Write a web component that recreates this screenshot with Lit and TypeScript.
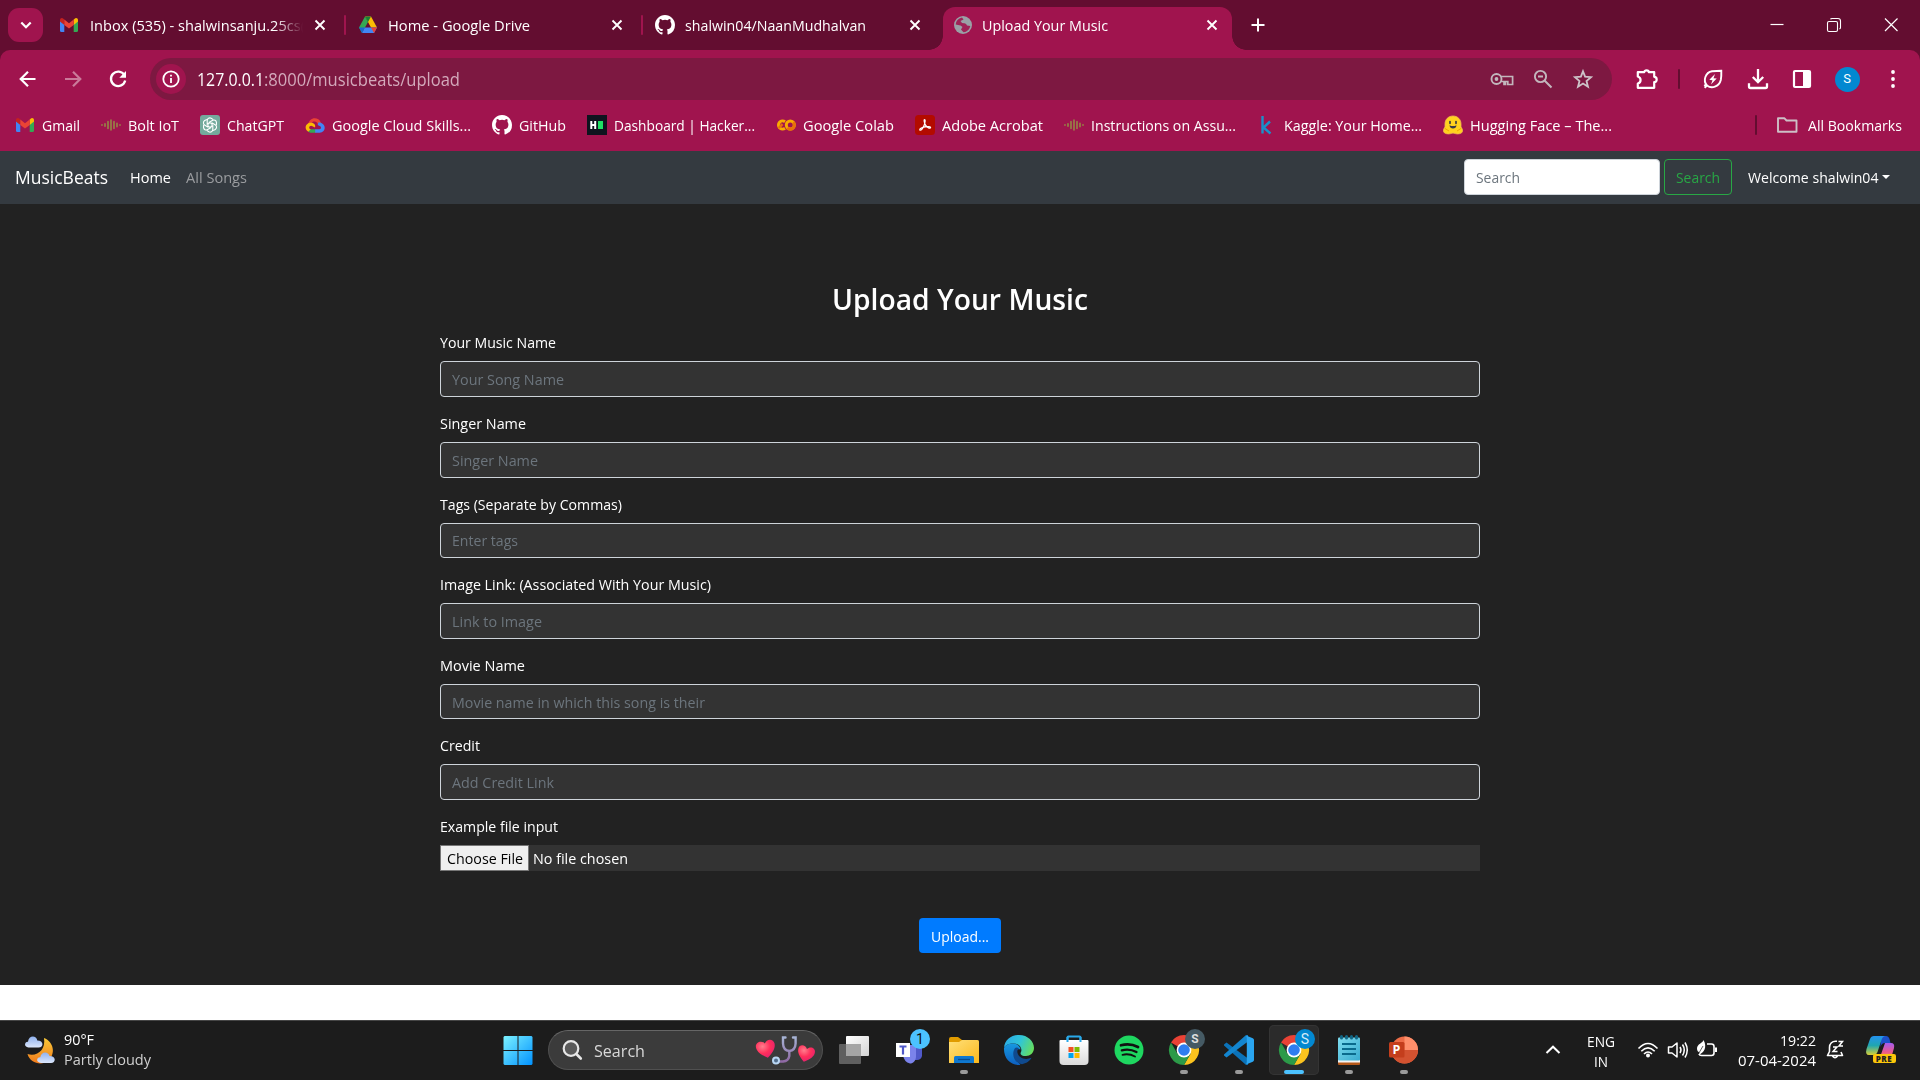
import { LitElement, html, svg, css, nothing } from "lit";
import { customElement, property } from "lit/decorators.js";

/* A single line of text, condensed or widened to an exact advance width. */
@customElement("fit-text")
class FitText extends LitElement {
  static styles = css`
    :host { display: inline-block; white-space: pre; flex: none; }
    .run { display: inline-block; transform-origin: 0 50%; }
  `;
  @property({ type: Number }) w = 0;
  @property() text = "";
  render() {
    return html`<span class="run">${this.text}</span>`;
  }
  updated() {
    const run = this.renderRoot.querySelector(".run") as HTMLElement;
    run.style.transform = "none";
    const natural = run.getBoundingClientRect().width;
    if (natural > 0) {
      this.style.width = `${this.w}px`;
      run.style.transform = `scaleX(${this.w / natural})`;
      run.style.marginRight = `${this.w - natural}px`;
    }
  }
}

const t = (text: string, w: number, cls = "") =>
  html`<fit-text class=${cls} .text=${text} .w=${w}></fit-text>`;

const ic = (w: number, h: number, body: unknown, cls = "") =>
  html`<svg class="ic ${cls}" width=${w} height=${h} viewBox="0 0 ${w} ${h}" fill="none">${body}</svg>`;

/* ---------- favicons ---------- */
const gmail = ic(20, 20, svg`
  <path d="M1 5.5V15.5Q1 17 2.4 17H5.3V9.2z" fill="#4285f4"/>
  <path d="M19 5.5V15.5Q19 17 17.600 17H14.700V9.200z" fill="#34a853"/>
  <path d="M14.700 4.800V9.900L19 6.600V5.200C19 3.300 17 2.400 15.600 3.800z" fill="#fbbc04"/>
  <path d="M1 5.200V6.600L5.300 9.900V4.500L4.400 3.800C3 2.400 1 3.300 1 5.200z" fill="#c5221f"/>
  <path d="M5.300 4.500L10 8.200L14.700 4.500V9.900L10 13.500L5.300 9.900z" fill="#ea4335"/>`);

const drive = ic(20, 20, svg`
  <path d="M7 1.500H13L19 12.500H13z" fill="#fbbc04"/>
  <path d="M7 1.500L1 12.500L4 18L10 7z" fill="#34a853"/>
  <path d="M7 1.500H13L10 7z" fill="#188038"/>
  <path d="M6.700 12.500H19L16 18H4z" fill="#4285f4"/>
  <path d="M13 12.500H19L16 18z" fill="#ea4335"/>
  <path d="M1 12.500H6.900L4 18z" fill="#1967d2"/>`);

const github = ic(20, 20, svg`
  <path transform="scale(1.25)" fill="#fff" d="M8 0C3.580 0 0 3.580 0 8c0 3.540 2.290 6.530 5.470 7.590.4.070.550-.170.550-.380 0-.190-.010-.820-.010-1.490-2.010.370-2.530-.490-2.690-.940-.090-.230-.480-.940-.820-1.130-.280-.150-.680-.520-.010-.530.630-.010 1.080.580 1.230.820.720 1.210 1.870.870 2.330.660.070-.520.280-.870.510-1.070-1.780-.200-3.640-.890-3.640-3.950 0-.870.310-1.590.820-2.150-.080-.200-.360-1.020.080-2.120 0 0 .670-.210 2.200.820a7.600 7.600 0 0 1 4 0c1.530-1.040 2.200-.820 2.200-.820.440 1.100.160 1.920.080 2.120.510.560.820 1.270.820 2.150 0 3.070-1.870 3.750-3.650 3.950.290.250.540.730.540 1.480 0 1.070-.010 1.930-.010 2.200 0 .210.150.460.550.380A8 8 0 0 0 16 8c0-4.420-3.580-8-8-8z"/>`);

const globe = ic(20, 20, svg`
  <circle cx="10" cy="10" r="9" fill="#9aa0a6"/>
  <path d="M9 2.500C5 3.500 3 6 2.700 9.500L7.500 10.500L9.500 12L8 14.500L10.500 17.300C14 17 16.500 14.500 17.300 11L14 10.500L13 8.500L9 8L7.500 6L10.500 4.500z" fill="#a0144e" opacity=".9"/>
  <path d="M9.500 6.300L13.300 6.800L16.500 9.500L13.500 9.300z" fill="#9aa0a6"/>`);

const bolt = ic(20, 20, svg`
  <g stroke="#959843" stroke-width="1.400" stroke-linecap="round">
    <path d="M1 9.800V10.200M4 8.800V11.200M16 8.300V11.700M19 9.800V10.200"/>
    <path d="M7 6.500V13.500M13 6.500V13.500M10 5V15"/></g>`);

const chatgpt = ic(20, 20, svg`
  <rect width="20" height="20" rx="3" fill="#74aa9c"/>
  <g stroke="#fff" stroke-width="1.100">
    ${[0, 60, 120, 180, 240, 300].map((a) => svg`
      <path transform="rotate(${a} 10 10)" d="M10 7.700L7.200 9.200V5.700C7.200 3.500 9.300 2.300 11.200 3.200L13.300 4.600"/>`)}
  </g>`);

const cloud = ic(20, 20, svg`
  <path d="M3.200 9.500C3.600 4.500 9 1.600 13.300 4.300C14.800 5.300 15.500 6.500 15.900 8L12.900 9.600C12.300 6.600 8.700 5.400 6.500 8z" fill="#ea4335"/>
  <path d="M13.500 7.200L15.900 7.700C19.500 9.300 21 13 18.500 16Q17 17.600 14.700 17.700H10V14.200H14.500C16.500 14 16.500 11.500 14.700 11L12.700 10z" fill="#4285f4"/>
  <path d="M3 16.500L5.700 14.200H10.200V17.700H5.500Q4 17.600 3 16.500z" fill="#34a853"/>
  <path d="M5.500 7.700C9 7.300 11 10 10 12.500L7.500 11.300C6.500 10 4.200 10.700 4.200 12.500C4.200 13.500 4.900 14.200 5.800 14.300L3.300 16.700C-1.200 14 .300 8 5.500 7.700z" fill="#fbbc04"/>`);

const hacker = ic(20, 20, svg`
  <rect width="20" height="20" fill="#0e141e"/>
  <path d="M4.300 6V14M8.200 6V14M4 10H8.500" stroke="#fff" stroke-width="2"/>
  <rect x="11" y="6" width="5" height="8" fill="#1ee063"/>`);

const colab = ic(20, 20, svg`
  <circle cx="14.300" cy="10" r="4" stroke="#f9ab00" stroke-width="3"/>
  <path d="M9 6.700A4.100 4.100 0 1 0 9 13.300" stroke="#f9ab00" stroke-width="3"/>
  <path d="M2.800 13L6.500 9.200" stroke="#e8710a" stroke-width="2.500"/>
  <path d="M11.300 13A4 4 0 0 0 17.200 7.200" stroke="#e8710a" stroke-width="3"/>`);

const acrobat = ic(20, 20, svg`
  <rect width="20" height="20" rx="3.500" fill="#b30b00"/>
  <path d="M9.500 4.500C10.700 4.500 10 8 9.200 10C8 13 6.200 15.600 5 15.200C3.800 14.300 7 12.300 10 11.800C13 11.300 15.700 11.600 15.600 12.800C15 14 11.600 12.300 10.200 9.600C9.300 7.800 8.700 4.500 9.500 4.500z" stroke="#fff" stroke-width="1.200"/>`);

const kaggle = ic(20, 20, svg`
  <path d="M5.500 1V18.500M13 6.500L6.500 12.500L13.500 18.500" stroke="#1c8fc9" stroke-width="2.400"/>`);

const hugging = ic(20, 20, svg`
  <path d="M10 1C14.700 1 18 4.500 18 9V12C20 14.500 20.500 18 16.500 18.700C13 19.500 11.500 18 10 18C8.500 18 7 19.500 3.500 18.700C-.500 18 0 14.500 2 12V9C2 4.500 5.300 1 10 1z" fill="#ffd21e" stroke="#f0b850" stroke-width=".8"/>
  <path d="M7 6.500V8.300M13 6.500V8.300" stroke="#3a3b45" stroke-width="1.700" stroke-linecap="round"/>
  <path d="M6.500 10.200Q10 12 13.500 10.200Q13 13.500 10 13.500T6.500 10.200z" fill="#3a3b45"/>
  <path d="M2 13.500L6 16M18 13.500L14 16" stroke="#f0a400" stroke-width="1"/>`);

/* ---------- browser controls ---------- */
const closeX = ic(20, 20, svg`<path d="M5.500 5.500L14.500 14.500M14.500 5.500L5.500 14.500" stroke="#fff" stroke-width="1.900"/>`);
const plus = ic(20, 20, svg`<path d="M10 3.500V16.500M3.500 10H16.500" stroke="#fff" stroke-width="2"/>`);
const chevronDown = ic(20, 20, svg`<path d="M5.300 7.500L10 12.200L14.700 7.500" stroke="#fff" stroke-width="2.200"/>`);
const arrowBack = ic(24, 24, svg`<path d="M19.500 12H5M12 4.700L4.700 12L12 19.300" stroke="#fff" stroke-width="2.200"/>`);
const arrowFwd = ic(24, 24, svg`<path d="M4 12H19M12 4.700L19.300 12L12 19.300" stroke="#ca7a9a" stroke-width="2.200"/>`);
const reload = ic(24, 24, svg`
  <path d="M18.300 8A7.200 7.200 0 1 0 19.200 13.500" stroke="#fff" stroke-width="2.300"/>
  <path d="M20 4V10.700H13.300z" fill="#fff"/>`);
const info = ic(20, 20, svg`
  <circle cx="10" cy="10" r="7.700" stroke="#fff" stroke-width="1.800"/>
  <path d="M10 9V14M10 5.800V7.600" stroke="#fff" stroke-width="1.800"/>`);
const key = ic(24, 24, svg`
  <circle cx="6.500" cy="12" r="5" stroke="#c2b6bc" stroke-width="1.900"/>
  <circle cx="6.500" cy="12" r="1.900" fill="#c2b6bc"/>
  <path d="M11 9.500H22.600V17.500H17.800V14.500H15.500V17.500H14V14.500H11" stroke="#c2b6bc" stroke-width="1.700"/>`);
const zoomOut = ic(22, 22, svg`
  <circle cx="8.500" cy="8.500" r="5.600" stroke="#c2b6bc" stroke-width="1.900"/>
  <path d="M12.500 12.500L19.500 19.500M6 8.500H11" stroke="#c2b6bc" stroke-width="2"/>`);
const star = ic(22, 22, svg`
  <path d="M11 3.300L13.100 8.700L19 9.200L14.500 13L16 18.800L11 15.600L6 18.800L7.500 13L3 9.200L8.900 8.700z" stroke="#cdc3c8" stroke-width="1.800"/>`);
const puzzle = ic(24, 24, svg`
  <path d="M3.800 5.200H10.200C10.200 2.700 14.800 2.700 14.800 5.200H20.200V9.800C23.500 9.800 23.500 15 20.200 15V20.800H3.800V16.500C7.500 15.500 7.500 10.500 3.800 9.500z" stroke="#fff" stroke-width="2.200" stroke-linejoin="round"/>`);
const leaf = ic(24, 24, svg`
  <path d="M3.700 20.800L6 18.500C1.500 13.500 4.500 5.500 11 4.300Q15.500 3.800 20.300 3.700Q20.500 9 19.800 13C18 20 10.500 22 6 18.500M3.500 17.500L5 20.300" stroke="#fff" stroke-width="1.900"/>
  <path d="M14 7L8.300 12.700L11.500 13.200L10 17.500L15.700 11.600L12.500 11.200z" fill="#fff"/>`);
const download = ic(24, 24, svg`
  <path d="M12 2V15M6.800 10L12 15.200L17.200 10" stroke="#fff" stroke-width="2.300"/>
  <path d="M3 16.300V19.500Q3 21 4.500 21H19.500Q21 21 21 19.500V16.300" stroke="#fff" stroke-width="2.300"/>`);
const sidePanel = ic(24, 24, svg`
  <rect x="4" y="4" width="16" height="16" rx="1" stroke="#fff" stroke-width="2.200"/>
  <rect x="13" y="4" width="7" height="16" fill="#fff"/>`);
const dots = ic(8, 24, svg`<circle cx="4" cy="5" r="1.900" fill="#fff"/><circle cx="4" cy="12" r="1.900" fill="#fff"/><circle cx="4" cy="19" r="1.900" fill="#fff"/>`);
const folder = ic(24, 20, svg`<path d="M3 16.700V3.300H9.500L11.500 5.500H21.500V16.700z" stroke="#cdbfc6" stroke-width="1.900" stroke-linejoin="round"/>`);

/* ---------- taskbar ---------- */
const weather = ic(32, 32, svg`
  <defs>
    <linearGradient id="moon" x1="0" y1="0" x2="0" y2="1"><stop offset="0" stop-color="#f8c938"/><stop offset="1" stop-color="#f07a1c"/></linearGradient>
    <linearGradient id="cl" x1="0" y1="0" x2="0" y2="1"><stop offset="0" stop-color="#8fb1ee"/><stop offset="1" stop-color="#dbe6fb"/></linearGradient>
  </defs>
  <path d="M20 4C30 8 32 20 24 27C17 32 6 29 3.500 20C13 23 22 16 20 4z" fill="url(#moon)"/>
  <path d="M4.500 13.500C-.500 13 .500 7.500 4 7.800C4.500 1 12.500 1 13.300 6.500C20 6.500 20 13.500 14.500 13.500z" fill="url(#cl)"/>
  <path d="M17 29C11.500 28.500 12.500 23 16.300 23.300C17 17 24.500 17 25.500 22C32.500 22 32 29 27 29z" fill="url(#cl)"/>`);

const startLogo = ic(50, 50, svg`
  <defs><linearGradient id="win" x1="10" y1="11" x2="40" y2="40" gradientUnits="userSpaceOnUse"><stop offset="0" stop-color="#7df3ff"/><stop offset="1" stop-color="#0091ff"/></linearGradient></defs>
  <path d="M11.500 11H24.500V25H10.500V12zM25.500 11H38.500L39.500 12V25H25.500zM10.500 26H24.500V40H11.500L10.500 39zM25.500 26H39.500V39L38.500 40H25.500z" fill="url(#win)"/>`);

const loupe = ic(24, 24, svg`
  <circle cx="11" cy="10.500" r="7.300" fill="#5a5a5a" stroke="#e8e8e8" stroke-width="2.200"/>
  <path d="M16.300 16L20.800 20.500" stroke="#e8e8e8" stroke-width="2.600" stroke-linecap="round"/>`);

const hearts = ic(62, 30, svg`
  <defs><radialGradient id="ht" cx=".35" cy=".3" r=".8"><stop offset="0" stop-color="#ff7d8c"/><stop offset=".5" stop-color="#ff2f5b"/><stop offset="1" stop-color="#e01e72"/></radialGradient>
  <linearGradient id="st" x1="0" y1="0" x2="0" y2="1"><stop offset="0" stop-color="#a6b3d4"/><stop offset="1" stop-color="#8f69a4"/></linearGradient></defs>
  <path transform="rotate(-12 11 14)" d="M11 23C4 18 1.500 14.500 1.500 10.500C1.500 5 8.500 4 11 8.500C13.500 4 20.500 5 20.500 10.500C20.500 14.500 18 18 11 23z" fill="url(#ht)"/>
  <path transform="rotate(14 51 18)" d="M51 27C45 22.500 42.500 19.500 42.500 15.500C42.500 10.500 49 10 51 14C53 10 59.500 10.500 59.500 15.500C59.500 19.500 57 22.500 51 27z" fill="url(#ht)"/>
  <path d="M30.500 2.500H28V8.500Q28.300 15.500 34.300 16Q40.300 15.500 40.600 8.500V2.500H38M34.300 16V21Q33.500 26 28 26.500H22" stroke="url(#st)" stroke-width="2.400" stroke-linecap="round"/>
  <circle cx="21" cy="25.500" r="3" fill="#54708e" stroke="#b9d7f3" stroke-width="2"/>`);

const taskView = ic(50, 50, svg`
  <defs><linearGradient id="tv" x1="0" y1="0" x2="1" y2="1"><stop offset="0" stop-color="#fff"/><stop offset="1" stop-color="#d4d4d4"/></linearGradient></defs>
  <rect x="17" y="11" width="23" height="20" rx="1" fill="url(#tv)"/>
  <rect x="10" y="19" width="22" height="20" rx="1" fill="#6b6b6b" opacity=".85"/>
  <rect x="17" y="19" width="15" height="12" fill="#a5a5a5"/>`);

const teams = ic(50, 50, svg`
  <path d="M26 20H38V31Q37 35 33 35H26z" fill="#5059c9"/>
  <circle cx="34" cy="16" r="4" fill="#5059c9"/>
  <path d="M19 20H32V31C32 37 28 38.500 26 38.500Q20 37 19 30z" fill="#7b83eb"/>
  <rect x="12" y="18" width="14" height="14" fill="#fff"/>
  <path d="M15.500 21.500H22.500M19 21.500V29.500" stroke="#5059c9" stroke-width="2.200"/>`);

const explorer = ic(50, 50, svg`
  <defs><linearGradient id="fo" x1="0" y1="0" x2="1" y2="1"><stop offset="0" stop-color="#ffe07a"/><stop offset="1" stop-color="#fbb81c"/></linearGradient></defs>
  <path d="M10 14Q10 12 12 12H19L23 15H38Q40 15 40 17V22H10z" fill="#e09b00"/>
  <path d="M10 17H20L23 15H38Q40 15 40 17V38H10z" fill="url(#fo)"/>
  <path d="M15 38V32.500Q15 31 16.500 31H33.500Q35 31 35 32.500V38z" fill="#0f78d0"/>
  <path d="M19 34.500H31" stroke="#084c8f" stroke-width="1.300"/>`);

const edge = ic(50, 50, svg`
  <defs>
    <linearGradient id="e1" x1="10" y1="12" x2="40" y2="26" gradientUnits="userSpaceOnUse"><stop offset="0" stop-color="#2aa8e8"/><stop offset=".5" stop-color="#30c5d8"/><stop offset="1" stop-color="#6be052"/></linearGradient>
    <linearGradient id="e2" x1="0" y1="0" x2="0" y2="1"><stop offset="0" stop-color="#1799e0"/><stop offset="1" stop-color="#0d5fc0"/></linearGradient>
  </defs>
  <path d="M10 23C10.500 15 17 10 25 10C34 10 40 16.500 40 23C40 28 36 31 32 31C28 31 25.500 29.500 27 27C28.500 24 26 18.500 19.500 18.500C14.500 18.500 11 20.500 10 23z" fill="url(#e1)"/>
  <path d="M10 23C11.500 19.500 15.500 18 19.500 18.500C24 19 26.500 22 26.500 24.500C21 23 18.500 30 23 36C25 38.500 28 40 25 40C16 40 9.500 33 10 23z" fill="url(#e2)"/>
  <path d="M21 23C17 29 20 38 28 39.300C32 38.500 36 36 37.500 32.800C31 35.500 25 33 23.500 28C23 26 23.500 24.500 25 23.500Q23 22 21 23z" fill="#104a8e"/>`);

const store = ic(50, 50, svg`
  <defs><linearGradient id="so" x1="0" y1="0" x2="0" y2="1"><stop offset="0" stop-color="#fff"/><stop offset="1" stop-color="#dadada"/></linearGradient></defs>
  <path d="M18.500 17V12.500Q18.500 11.500 19.500 11.500H30.500Q31.500 11.500 31.500 12.500V17" stroke="#29a9ea" stroke-width="2"/>
  <path d="M10.500 16Q10.500 15 11.500 15H38.500Q39.500 15 39.500 16V36Q39.500 40 35.500 40H14.500Q10.500 40 10.500 36z" fill="url(#so)"/>
  <path d="M18.500 12V17M31.500 12V17" stroke="#29a9ea" stroke-width="2"/>
  <rect x="19.500" y="22" width="5" height="5" fill="#f25022"/><rect x="25.500" y="22" width="5" height="5" fill="#7fba00"/>
  <rect x="19.500" y="28" width="5" height="5" fill="#00a4ef"/><rect x="25.500" y="28" width="5" height="5" fill="#ffb900"/>`);

const spotify = ic(50, 50, svg`
  <circle cx="25" cy="25" r="14.500" fill="#1ed760"/>
  <g stroke="#111" stroke-linecap="round"><path d="M17 20.300Q26 17.800 34 22" stroke-width="2.700"/><path d="M17.800 25.300Q25.500 23.300 32.500 27" stroke-width="2.300"/><path d="M18.500 29.800Q25 28.200 31 31.500" stroke-width="1.900"/></g>`);

const chrome = ic(50, 50, svg`
  <path d="M25 25L12 17.500A15 15 0 0 1 38 17.500z" fill="#e94235"/>
  <path d="M25 17.500H38A15 15 0 0 1 25 40L31.500 28.700z" fill="#fcc31e"/>
  <path d="M31.500 28.700L25 40A15 15 0 0 1 12 17.500L18.500 28.700z" fill="#2c9a48"/>
  <path d="M12 17.500H38Q36 12 25 17.500z" fill="#e94235"/>
  <circle cx="25" cy="25" r="7.400" fill="#fff"/><circle cx="25" cy="25" r="5.800" fill="#2f7df0"/>`);

const vscode = ic(50, 50, svg`
  <path d="M10 19.500L12.500 17.500L34 33.500V40L31.500 39.500L10 20.500z" fill="#0b72b8"/>
  <path d="M10 30.500L12.500 32.500L34 16.500V10L31.500 10.500L10 29.500z" fill="#1385cf"/>
  <path d="M31.500 10.300L38.800 13.300Q40 14 40 15V35Q40 36 38.800 36.700L31.500 39.700Q32.800 38.500 32.800 37V13Q32.800 11.500 31.500 10.300z" fill="#2aa5f0"/>`);

const notepad = ic(50, 50, svg`
  <defs><linearGradient id="np" x1="0" y1="0" x2="1" y2="1"><stop offset="0" stop-color="#7edcee"/><stop offset="1" stop-color="#38abd0"/></linearGradient></defs>
  <rect x="14" y="34" width="22" height="6" rx="1" fill="#b4581a"/>
  <rect x="14" y="33" width="22" height="4.500" fill="#f3f3f3"/>
  <rect x="14" y="12.500" width="22" height="23" rx="1" fill="url(#np)"/>
  <path d="M18 19H32M18 24H32M18 29H32" stroke="#0a6a8c" stroke-width="1.800"/>
  <path d="M17.500 11.500V13M22.500 11.500V13M27.500 11.500V13M32.500 11.500V13" stroke="#116685" stroke-width="3" stroke-linecap="round"/>`);

const powerpoint = ic(50, 50, svg`
  <circle cx="25.500" cy="25" r="13.500" fill="#ed6c47"/>
  <path d="M25.500 11.500A13.500 13.500 0 0 1 39 25H25.500z" fill="#ff8f6b"/>
  <path d="M12 25H39A13.500 13.500 0 0 1 12 25z" fill="#d35230"/>
  <rect x="10" y="17" width="15.500" height="15.500" rx="1.500" fill="#c43e1c"/>`);

const chevUp = ic(20, 20, svg`<path d="M3.500 13L10 6.700L16.500 13" stroke="#fff" stroke-width="2"/>`);
const wifi = ic(22, 22, svg`
  <g stroke="#fff" stroke-width="1.600"><path d="M1.500 9.500Q11 -.500 20.500 9.500"/><path d="M4.300 12.300Q11 5.500 17.700 12.300"/><path d="M7 15Q11 11 15 15"/></g><circle cx="11" cy="16.500" r="2" fill="#fff"/>`);
const speaker = ic(22, 22, svg`
  <path d="M1.500 8H5L10 4V18L5 14H1.500z" stroke="#fff" stroke-width="1.500" stroke-linejoin="round"/>
  <path d="M13 8Q15 11 13 14M15.500 5.500Q19 11 15.500 16.500M18 3.500Q22.500 11 18 18.500" stroke="#fff" stroke-width="1.500"/>`);
const battery = ic(22, 22, svg`
  <path d="M11 5H15.500Q18 5 18 7.500V14Q18 16.500 15.500 16.500H5.500Q3.500 16.500 3 15" stroke="#fff" stroke-width="1.600"/>
  <path d="M19 8.500H21V13H19z" fill="#fff"/>
  <path d="M7.500 1C7 4 1 5 1 9.500Q1 13 4 13.500L2.500 15.500C8 14.500 11.500 8 7.500 1z" fill="#fff"/><path d="M7 7L3.500 13" stroke="#1c1c1c" stroke-width=".7"/>`);
const bell = ic(22, 22, svg`
  <path d="M12 2.300C7 1.500 4.500 5 4.500 8.500V12.500L2.500 16.500H17.500L16 13M7.500 17Q10 20.500 12.500 17" stroke="#fff" stroke-width="1.600" stroke-linejoin="round"/>
  <path d="M8 8H12L8 12.500H12.500M13.500 2.500H17.500L14 7H18" stroke="#fff" stroke-width="1.500"/>`);
const copilot = ic(32, 32, svg`
  <defs><linearGradient id="c1" x1="0" y1="0" x2="0" y2="1"><stop offset="0" stop-color="#2493f0"/><stop offset=".5" stop-color="#20a6b0"/><stop offset="1" stop-color="#d8cf35"/></linearGradient>
  <linearGradient id="c2" x1="0" y1="0" x2="0" y2="1"><stop offset="0" stop-color="#a45cf0"/><stop offset=".6" stop-color="#ec5a8c"/><stop offset="1" stop-color="#f79a4c"/></linearGradient></defs>
  <path d="M16 2H21Q23.500 2 24.500 5L25.500 9H20Q16.500 9 15.500 13z" fill="#1c50c8"/>
  <path d="M20 9H26Q30 9 29 14L27 21Q26 24 22 24H12Q15.500 23 16.500 19z" fill="url(#c2)"/>
  <path d="M9 2H20Q17.500 2.500 16.500 6L12.500 18Q11.500 21 8 21H4Q0 21 1.500 15L5 5Q6 2 9 2z" fill="url(#c1)"/>`);

type Tab = { icon: unknown; title: string; w: number; cls: string };
const tabs: Tab[] = [
  { icon: gmail, title: "Inbox (535) - shalwinsanju.25cs(", w: 215, cls: "first" },
  { icon: drive, title: "Home - Google Drive", w: 142, cls: "second" },
  { icon: github, title: "shalwin04/NaanMudhalvan", w: 181, cls: "third" },
];

const bookmarks: [unknown, string, number][] = [
  [gmail, "Gmail", 38],
  [bolt, "Bolt IoT", 51],
  [chatgpt, "ChatGPT", 57],
  [cloud, "Google Cloud Skills...", 139],
  [github, "GitHub", 47],
  [hacker, "Dashboard | Hacker...", 141],
  [colab, "Google Colab", 91],
  [acrobat, "Adobe Acrobat", 101],
  [bolt, "Instructions on Assu...", 145],
  [kaggle, "Kaggle: Your Home...", 138],
  [hugging, "Hugging Face – The...", 142],
];

const fields: [string, number, string, number][] = [
  ["Your Music Name", 116, "Your Song Name", 112],
  ["Singer Name", 86, "Singer Name", 86],
  ["Tags (Separate by Commas)", 182, "Enter tags", 66],
  ["Image Link: (Associated With Your Music)", 271, "Link to Image", 90],
  ["Movie Name", 85, "Movie name in which this song is their", 253],
  ["Credit", 40, "Add Credit Link", 102],
];

type App = { icon: unknown; run?: boolean; active?: boolean; badge?: string; tone?: string; letter?: boolean };
const apps: App[] = [
  { icon: taskView },
  { icon: teams, badge: "1", tone: "cyan" },
  { icon: explorer, run: true },
  { icon: edge },
  { icon: store },
  { icon: spotify },
  { icon: chrome, run: true, badge: "S", tone: "slate" },
  { icon: vscode, run: true },
  { icon: chrome, active: true, badge: "S", tone: "blue" },
  { icon: notepad, run: true },
  { icon: powerpoint, run: true, letter: true },
];

@customElement("app-root")
class AppRoot extends LitElement {
  static styles = css`
    :host {
      display: flex; flex-direction: column; width: 1920px; height: 1080px; overflow: hidden;
      font-family: "Open Sans", "Noto Sans", sans-serif; font-size: 15px; line-height: 20px;
      color: #fff; background: #fff;
    }
    * { box-sizing: border-box; }
    .ic { display: block; flex: none; overflow: visible; }
    fit-text { display: block; }

    .strip { display: flex; height: 50px; background: #630d30; align-items: center; padding-left: 8px; flex: none; }
    .tabsearch { width: 35px; height: 34px; border-radius: 11px; background: #a0144e; display: flex; align-items: center; justify-content: center; flex: none; }
    .tab { display: flex; align-items: center; height: 50px; flex: none; padding-left: 12px; }
    .tab.first { width: 303px; padding-left: 16px; }
    .tab.second { width: 297px; }
    .tab.third { width: 300px; }
    .tabtitle { margin-left: 10px; width: 219px; overflow: hidden; flex: none; }
    .first .tabtitle { margin-left: 11px; width: 220px; -webkit-mask-image: linear-gradient(90deg, #000 185px, transparent 213px); mask-image: linear-gradient(90deg, #000 185px, transparent 213px); }
    .third .tabtitle { width: 220px; }
    .sep { width: 2px; height: 20px; border-radius: 1px; background: #a0144e; margin-left: 14px; flex: none; }
    .active-tab { display: flex; align-items: center; position: relative; width: 289px; height: 43px; align-self: flex-end; border-radius: 12px 12px 0 0; background: #a0144e; padding: 0 0 7px 10px; flex: none; }
    .active-tab::before, .active-tab::after { content: ""; position: absolute; bottom: 0; width: 14px; height: 14px; }
    .active-tab::before { left: -14px; background: radial-gradient(circle at 0 0, transparent 13.500px, #a0144e 14px); }
    .active-tab::after { right: -14px; background: radial-gradient(circle at 100% 0, transparent 13.500px, #a0144e 14px); }
    .active-tab .tabtitle { margin-left: 9px; width: 220px; }
    .plus { margin-left: 15.500px; }
    .winctl { margin-left: auto; display: flex; gap: 37px; padding-right: 19px; }

    .chrome { background: #630d30; flex: none; }
    .bars { background: #a0144e; height: 101px; border-radius: 10px 10px 0 0; display: flex; flex-direction: column; }
    .toolbar { display: flex; align-items: center; height: 58px; padding: 8px 0 8px 16px; }
    .toolbar .gap { margin-left: 21px; }
    .omni { display: flex; align-items: center; width: 1462px; height: 42px; border-radius: 21px; background: #7d1841; margin-left: 20px; padding: 0 18px 0 6px; font-size: 18px; line-height: 24px; flex: none; }
    .infobtn { width: 30px; height: 30px; border-radius: 50%; background: #a0144e; display: flex; align-items: center; justify-content: center; margin-right: 11px; }
    .dim { color: #d3a9bb; }
    .omni-icons { margin-left: auto; display: flex; align-items: center; gap: 18px; }
    .vbar { width: 2px; height: 20px; border-radius: 1px; background: #630d30; flex: none; }
    .tools { display: flex; align-items: center; margin-left: 22px; }
    .tools .vbar { margin: 0 20.500px 0 20px; }
    .dl { margin-left: 21px; }
    .sp { margin-left: 20px; }
    .avatar { width: 25px; height: 25px; border-radius: 50%; background: #0288d1; display: flex; align-items: center; justify-content: center; font-size: 13px; font-family: Roboto, sans-serif; margin: 0 29px 0 21px; }

    .marks { display: flex; align-items: center; height: 34px; padding: 0 18px 0 15px; gap: 20.700px; }
    .mark { display: flex; align-items: center; gap: 7.300px; flex: none; }
    .marks fit-text { position: relative; top: -0.500px; }
    .marks .right { margin-left: auto; display: flex; align-items: center; }
    .marks .vbar { margin-right: 18px; }
    .marks .right fit-text { margin-left: 9px; }

    .nav { height: 53px; background: #343a40; display: flex; align-items: center; flex: none; padding: 0 30px 1px 15px; }
    .brand { font-size: 18.750px; line-height: 28px; margin-right: 22px; }
    .muted { color: #9a9c9f; margin-left: 15px; }
    .searchbox { margin-left: auto; width: 196px; height: 36px; border-radius: 4px; background: #fff; border: 1px solid #ced4da; display: flex; align-items: center; padding-left: 11px; color: #6c757d; }
    .searchbtn { width: 68px; height: 36px; margin: 0 15.500px 0 4px; border: 1px solid #28a745; color: #28a745; border-radius: 4px; display: flex; align-items: center; justify-content: center; }
    .caret { border-top: 4.500px solid #fff; border-left: 4.500px solid transparent; border-right: 4.500px solid transparent; margin: 0 0 1px 4px; }

    .page { height: 781px; background: #222; padding: 77px 440px 0; flex: none; display: flex; flex-direction: column; }
    .title { font-size: 29px; line-height: 36px; font-weight: 600; align-self: center; margin: 0 0 14.300px; }
    .group { margin-bottom: 15px; height: 65.625px; flex: none; }
    .lbl { height: 22.500px; line-height: 22.500px; margin-bottom: 7.500px; }
    .field { height: 35.625px; border: 1px solid #ced4da; border-radius: 4px; background: #333; color: #6c757d; display: flex; align-items: center; padding-left: 11px; }
    .file { display: flex; align-items: center; height: 26px; background: #333; }
    .choose { width: 89px; height: 26px; background: #efefef; border: 1px solid #767676; color: #000; display: flex; align-items: center; justify-content: center; margin-right: 4px; }
    .upload { align-self: center; margin-top: 22.500px; width: 82px; height: 35px; background: #007bff; border-radius: 4px; display: flex; align-items: center; justify-content: center; }

    .blank { height: 35px; background: #fff; flex: none; }

    .taskbar { height: 60px; background: #1c1c1c; border-top: 1px solid #454545; display: flex; align-items: center; flex: none; padding-bottom: 1px; }
    .weather { display: flex; align-items: center; width: 468px; padding-left: 24px; gap: 8px; height: 58px; margin-right: 24.500px; }
    .wt { display: flex; flex-direction: column; margin-bottom: 2px; }
    .cloudy { color: #cfcfcf; }
    .pill { width: 275px; height: 40px; border-radius: 20px; background: #3b3b3b; border: 1px solid #505050; border-top-color: #666; display: flex; align-items: center; margin: 0 6px 0 5.500px; padding-left: 10.500px; font-size: 17px; line-height: 24px; color: #d8d8d8; }
    .pill .ic + fit-text { margin: 1px 0 0 10px; }
    .pill .ic:last-child { margin-left: auto; margin-right: 5px; }
    .apps { display: flex; gap: 5px; }
    .app { position: relative; width: 50px; height: 50px; border-radius: 5px; }
    .app.on { background: #2b2b2b; box-shadow: inset 0 0 0 1px #343434; }
    .ind { position: absolute; left: 21px; bottom: 1px; width: 8px; height: 4px; border-radius: 2px; background: #9a9a9a; }
    .on .ind { left: 15px; width: 20px; background: #4cc2ff; }
    .badge { position: absolute; left: 26px; top: 4px; width: 20px; height: 20px; border-radius: 50%; display: flex; align-items: center; justify-content: center; font-size: 12px; line-height: 20px; font-family: Roboto, sans-serif; }
    .cyan { background: #4cc2ff; color: #111; font-size: 14px; }
    .slate { background: #455a64; color: #ddd; font-weight: 700; }
    .blue { background: #0288d1; color: #d5ecf8; font-size: 14px; }
    .pletter { position: absolute; left: 12px; top: 16px; width: 11px; line-height: 17px; font-size: 12.500px; font-weight: 700; text-align: center; }
    .tray { margin-left: auto; display: flex; align-items: center; padding-right: 23.500px; }
    .lang { display: flex; flex-direction: column; align-items: center; margin: 1px 22.500px 0 24px; }
    .status { display: flex; gap: 7.500px; }
    .clock { display: flex; flex-direction: column; align-items: flex-end; margin: 0 9px 1px 20px; }
    .copilot { position: relative; margin-left: 17.500px; }
    .pre { position: absolute; left: 8px; top: 20px; width: 23px; height: 9px; border-radius: 2px; background: #fcc60a; color: #222; font-size: 8px; line-height: 9px; font-weight: 800; text-align: center; letter-spacing: .5px; }
  `;

  private tab(tb: Tab, i: number) {
    return html`<div class="tab ${tb.cls}">
      ${tb.icon}<div class="tabtitle">${t(tb.title, tb.w)}</div>
      ${closeX}${i < 2 ? html`<div class="sep"></div>` : nothing}
    </div>`;
  }

  private app(a: App) {
    return html`<div class="app ${a.active ? "on" : ""}">
      ${a.icon}
      ${a.badge ? html`<div class="badge ${a.tone}">${a.badge}</div>` : nothing}
      ${a.letter ? html`<div class="pletter">P</div>` : nothing}
      ${a.run || a.active ? html`<div class="ind"></div>` : nothing}
    </div>`;
  }

  render() {
    return html`
      <div class="strip">
        <div class="tabsearch">${chevronDown}</div>
        ${tabs.map((x, i) => this.tab(x, i))}
        <div class="active-tab">${globe}<div class="tabtitle">${t("Upload Your Music", 126)}</div>${closeX}</div>
        <div class="plus">${plus}</div>
        <div class="winctl">
          ${ic(20, 20, svg`<path d="M3.500 9.500H16.500" stroke="#fff" stroke-width="1.200"/>`)}
          ${ic(20, 20, svg`<rect x="3.500" y="6.500" width="10" height="10" rx="1.500" stroke="#fff" stroke-width="1.100"/><path d="M6.500 4.300Q6.800 3.500 8 3.500H14Q16.500 3.500 16.500 6V12.500Q16.500 13.500 15.500 14" stroke="#fff" stroke-width="1.100"/>`)}
          ${ic(20, 20, svg`<path d="M4 3.500L16.500 16M16.500 3.500L4 16" stroke="#fff" stroke-width="1.200"/>`)}
        </div>
      </div>
      <div class="chrome"><div class="bars">
        <div class="toolbar">
          ${arrowBack}<div class="gap">${arrowFwd}</div><div class="gap">${reload}</div>
          <div class="omni">
            <div class="infobtn">${info}</div>
            ${t("127.0.0.1", 67)}${t(":8000/musicbeats/upload", 196, "dim")}
            <div class="omni-icons">${key}${zoomOut}${star}</div>
          </div>
          <div class="tools">
            ${puzzle}<div class="vbar"></div>${leaf}
            <div class="dl">${download}</div>
            <div class="sp">${sidePanel}</div>
            <div class="avatar">S</div>${dots}
          </div>
        </div>
        <div class="marks">
          ${bookmarks.map(([icon, label, w]) => html`<div class="mark">${icon}${t(label, w)}</div>`)}
          <div class="right"><div class="vbar"></div>${folder}${t("All Bookmarks", 94)}</div>
        </div>
      </div></div>
      <div class="nav">
        ${t("MusicBeats", 93, "brand")}${t("Home", 41)}${t("All Songs", 61, "muted")}
        <div class="searchbox">${t("Search", 44)}</div>
        <div class="searchbtn">${t("Search", 44)}</div>
        ${t("Welcome shalwin04", 130.5)}<div class="caret"></div>
      </div>
      <div class="page">
        ${t("Upload Your Music", 256, "title")}
        ${fields.map(([l, lw, p, pw]) => html`<div class="group">
          <div class="lbl">${t(l, lw)}</div>
          <div class="field">${t(p, pw)}</div>
        </div>`)}
        <div class="group">
          <div class="lbl">${t("Example file input", 118)}</div>
          <div class="file"><div class="choose">${t("Choose File", 76)}</div>${t("No file chosen", 95)}</div>
        </div>
        <div class="upload">${t("Upload...", 58)}</div>
      </div>
      <div class="blank"></div>
      <div class="taskbar">
        <div class="weather">${weather}<div class="wt">${t("90°F", 30)}${t("Partly cloudy", 87, "cloudy")}</div></div>
        ${startLogo}
        <div class="pill">${loupe}${t("Search", 51)}${hearts}</div>
        <div class="apps">${apps.map((a) => this.app(a))}</div>
        <div class="tray">
          ${chevUp}
          <div class="lang">${t("ENG", 28)}${t("IN", 14)}</div>
          <div class="status">${wifi}${speaker}${battery}</div>
          <div class="clock">${t("19:22", 36)}${t("07-04-2024", 78)}</div>
          ${bell}
          <div class="copilot">${copilot}<div class="pre">PRE</div></div>
        </div>
      </div>
    `;
  }
}
